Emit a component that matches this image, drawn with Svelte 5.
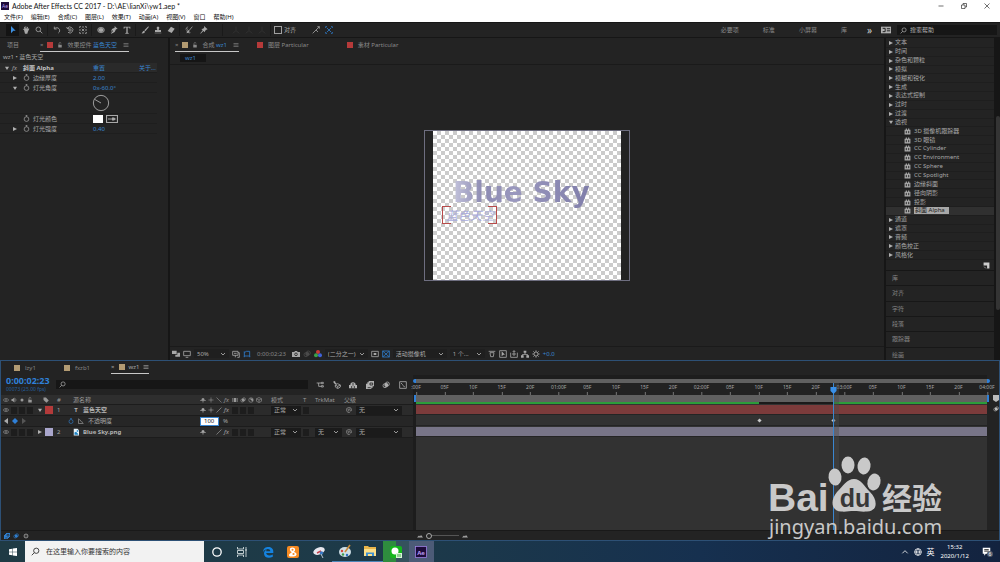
<script>
    const menus = ['文件(F)', '编辑(E)', '合成(C)', '图层(L)', '效果(T)', '动画(A)', '视图(V)', '窗口', '帮助(H)'];

    const tool_groups = [
        ['select', 'hand', 'zoom'],
        ['rotate', 'orbit', 'pan'],
        ['ellipse', 'pen', 'type'],
        ['brush', 'stamp', 'eraser'],
        ['roto', 'pin']
    ];

    const workspaces = ['必要项', '标准', '小屏幕', '库'];

    const categories_top = ['文本', '时间', '杂色和颗粒', '模拟', '模糊和锐化', '生成', '表达式控制', '过时', '过渡'];
    const perspective = ['3D 摄像机跟踪器', '3D 眼镜', 'CC Cylinder', 'CC Environment', 'CC Sphere', 'CC Spotlight', '边缘斜面', '径向阴影', '投影', '斜面 Alpha'];
    const categories_bottom = ['通道', '遮罩', '音频', '颜色校正', '风格化'];
    const collapsed = ['库', '对齐', '字符', '段落', '跟踪器', '绘画'];

    // one label every five frames
    const frames = ['05F', '10F', '15F', '20F'];
    const ticks = [':00F'];
    for (let s = 1; s <= 4; s++) ticks.push(...frames, `0${s}:00F`);

    const keyframes = [60, 73];
    const playhead = 73;

    const apps = ['cortana', 'taskview', 'edge', 'uc', 'snip', 'paint', 'folder', 'wechat', 'ae'];

    let snapping = $state(false);
    let opacity = $state('100');
    let search_help = $state('');
    let search_layers = $state('');
    let search_task = $state('');

    // s = stroked path, f = filled path, k = dark detail, on a 12x12 grid
    const icons = {
        select: { f: 'M3 0L10 7L6.500 7.200L3 11Z' },
        hand: { f: 'M3 6L1 4.500L2 4L3.500 5L3 1.500L4 1.300L5 4.500L5.300 .5H6.300L6.700 4.500L8 1L9 1.500L8.500 5L10 3.500L11 4L8.700 9L8 11.500H4.500Z' },
        zoom: { s: 'M5 1.500A3.500 3.500 0 1 0 5 8.500A3.500 3.500 0 1 0 5 1.500M7.500 7.500L11 11' },
        rotate: { s: 'M2.500 4A4.300 4.300 0 1 1 8 10.500M2 1V4.500H5.500' },
        orbit: { s: 'M2 3.500A4.500 4.500 0 1 1 3 9.500M1 1.500L2 4L4.500 3.500M6 4.200A1.800 1.800 0 1 0 6 7.800A1.800 1.800 0 1 0 6 4.200' },
        pan: { s: 'M1 3V1H3M9 1H11V3M11 9V11H9M3 11H1V9M6 0V3M6 9V12M0 6H3M9 6H12M4 4L8 8M8 4L4 8' },
        ellipse: { s: 'M6 2A5 4 0 1 0 6 10A5 4 0 1 0 6 2', f: 'M6 3A4 3 0 1 0 6 9A4 3 0 1 0 6 3' },
        pen: { f: 'M7 0L11.500 4.500L9 5L7 9L2 11.500L1.500 11L4.500 7.500L3.500 6.500L1 10L3 4.500L7 2.500Z' },
        type: { f: 'M1 1H11V4H10L9.500 2.300H7V10L8.500 10.500V11.500H3.500V10.500L5 10V2.300H2.500L2 4H1Z' },
        brush: { f: 'M11 .5L11.800 1.500L6.500 8L5 6.500ZM4.500 7L6 8.700C5.500 11 3 11.500 .5 11C2.500 10 2 8 4.500 7Z' },
        stamp: { f: 'M4.500 1H7.500L8 3L7 6H10.500V9H1.500V6H5L4 3ZM1 10H11V11H1Z' },
        eraser: { f: 'M6 1L11.500 4L7 10.500L1 7.500ZM1 8.500L6 11.300' },
        roto: { s: 'M1 5L4 1M11 1L6 7M4 4C1 8 5 11 8 10', f: 'M5 6L7 7.500L5 10L2 11Z' },
        pin: { f: 'M6 0L11.500 5L9.500 5.500L7.500 7.500L7.500 9.500L5 7.500L1 11.500L.5 11L4 6.500L2 4.500L4.500 4.300L6.200 2.500Z' },
        axes: { s: 'M6 1V7L1 11M6 7L11 11' },
        magnet: { s: 'M1 11L6 6L9 9M8 1L11 1V4M6 6L11 1' },
        cross: { s: 'M1 3V1H3M9 1H11V3M11 9V11H9M3 11H1V9M3 3L9 9M9 3L3 9' },
        menu: { s: 'M1 3H11M1 6H11M1 9H11' },
        lock: { s: 'M4 6V3A2 2 0 0 1 8 3', f: 'M2.500 5.500H9.500V11H2.500Z' },
        watch: { s: 'M6 3A4 4 0 1 0 6 11A4 4 0 1 0 6 3M4.500 1H7.500M6 1V3' },
        preset: { f: 'M1 3H3V1H5V3H7V1H9V3H11V11H1Z', k: 'M4 5V9M8 5V9M3 7H5M7 7H9' },
        tag: { f: 'M1 1H6L11.500 7L7 11.500L1 6Z' },
        eye: { s: 'M.5 6C3 2 9 2 11.500 6C9 10 3 10 .5 6Z', f: 'M6 4.500A1.500 1.500 0 1 0 6 7.500A1.500 1.500 0 1 0 6 4.500' },
        speaker: { f: 'M1 4H3L7 1V11L3 8H1Z', s: 'M9 3Q11 6 9 9' },
        solo: { f: 'M6 3A3 3 0 1 0 6 9A3 3 0 1 0 6 3' },
        shy: { f: 'M3 5A3 3 0 0 1 9 5V6H11.500V7.500H6.800V11H5.200V7.500H.5V6H3Z' },
        sun: { s: 'M6 1V3M6 9V11M1 6H3M9 6H11M6 4A2 2 0 1 0 6 8A2 2 0 1 0 6 4' },
        quality: { s: 'M1 1L11 11' },
        slash: { s: 'M1 11L11 1' },
        frame: { f: 'M1 2H11V10H1Z', k: 'M3 2V10M9 2V10' },
        blur: { s: 'M4.500 4A3 3 0 1 0 4.500 10A3 3 0 1 0 4.500 4M8 1.500A3 3 0 1 1 8 7.500A3 3 0 1 1 8 1.500', f: 'M6.500 3A3 3 0 1 0 6.500 9A3 3 0 1 0 6.500 3' },
        half: { s: 'M6 1.500A4.500 4.500 0 1 0 6 10.500A4.500 4.500 0 1 0 6 1.500', f: 'M3 3L9 9A4.300 4.300 0 0 0 9 3Z' },
        cube: { s: 'M6 1L11 3.500V8.500L6 11L1 8.500V3.500ZM1 3.500L6 6L11 3.500M6 6V11' },
        swirl: { s: 'M8 10.500A5 5 0 1 1 11 6C11 9 8 8.500 8 6.500A2 2 0 1 0 6 8' },
        graph: { s: 'M1 1V11H11M2 3C6 3 5 9 10 9' },
        graphbox: { s: 'M1 1H11V11H1ZM3 3L5 5C6 8 8 8 9 9' },
        flow: { s: 'M1 3H8M4 3V8H8M8 2H11V4H8ZM8 7H11V9H8Z' },
        draft: { s: 'M7 4L11 6V9L7 11.500L3.500 9V6ZM3.500 6L7 8L11 6M7 8V11', f: 'M0 1L3 0L4 3L6 4L3 5Z' },
        hide: { f: 'M2 6A4 4 0 0 1 10 6H12V11H0V6Z', k: 'M4 7.500V11M8 7.500V11M6 3V7' },
        frames: { f: 'M4 0H12V8H10V10H8V12H0V4H2V2H4Z', k: 'M6 3H10V6H6ZM2.500 10H7' },
        stack: { f: 'M0 1H7V6H0ZM5 7H8V4H12V10H5Z' },
        monitor: { s: 'M1 2H11V8.500H1ZM4 11H8' },
        res: { s: 'M1 2H9V8H1ZM9 4H11V11H8M5 8V11M3 5H7' },
        mask: { s: 'M2 9V4L5 2H10V9ZM1 10H3M9 10H11M1 3H3' },
        camera: { f: 'M0 3H3.500L4.500 1.500H7.500L8.500 3H12V10.500H0Z', k: 'M6 4.500A2 2 0 1 0 6 8.500A2 2 0 1 0 6 4.500' },
        roi: { s: 'M1 2H11V10H1Z', f: 'M4 4.500H8V7.500H4Z' },
        grid: { s: 'M1 1.500H11V10.500H1ZM1 1.500L11 10.500M11 1.500L1 10.500' },
        pixel: { s: 'M1 2H11M3 4H9L8 10H4Z' },
        fast: { s: 'M1 1H11V11H1Z', f: 'M4 2L9 7H6.500L4 9.500Z' },
        share: { s: 'M1 4V11H11V4M6 9V1M4 3L6 1L8 3M3 6H9' },
        tree: { f: 'M4 1H8V4H6.700V6H10V8H12V11.500H8V8H9V7H3V8H4V11.500H0V8H2V6H5.300V4H4Z' },
        gear: { s: 'M6 3A3 3 0 1 0 6 9A3 3 0 1 0 6 3M6 .5V3M6 9V11.500M.5 6H3M9 6H11.500M2 2L4 4M8 8L10 10M10 2L8 4M2 10L4 8' },
        note: { f: 'M1 1H11V11H7V6H1Z', s: 'M2 8L5 11' },
        chat: { f: 'M1 1H11V9H5L3 11.500V9H1Z', k: 'M3 3.500H9M3 5.500H9' },
        globe: { s: 'M6 1A5 5 0 1 0 6 11A5 5 0 1 0 6 1M6 1C3 4 3 8 6 11C9 8 9 4 6 1M1 6H11' },
        up: { s: 'M2 8L6 4L10 8' },
        hills: { f: 'M0 9L4 5L6 7L8 4L12 9Z' },
        panel: { f: 'M0 2H12V10H0Z', k: 'M2 4H5V8H2M7 4.500H11M7 7H11' },
        windows: { f: 'M0 1.700L5 1V5.600H0ZM5.700 .9L12 0V5.600H5.700ZM0 6.400H5V11L0 10.300ZM5.700 6.400H12V12L5.700 11.100Z' },
        minimize: { s: 'M1 6H11' },
        restore: { s: 'M1 4H8V11H1ZM4 4V1H11V8H8' },
        close: { s: 'M1 1L11 11M11 1L1 11' }
    };
</script>

{#snippet icon(name)}
    <svg class="icon" viewBox="0 0 12 12" aria-hidden="true">
        {#if icons[name].f}<path class="fill" d={icons[name].f} />{/if}
        {#if icons[name].s}<path class="stroke" d={icons[name].s} />{/if}
        {#if icons[name].k}<path class="cut" d={icons[name].k} />{/if}
    </svg>
{/snippet}

{#snippet dropdown(label, value)}
    <span class="dropdown">
        <select aria-label={label}><option>{value}</option></select>
        <svg viewBox="0 0 6 6" aria-hidden="true"><path d="M1 2L3 4L5 2" /></svg>
    </span>
{/snippet}

{#snippet twirl(open)}
    <svg class="twirl" viewBox="0 0 6 6" aria-hidden="true">
        <path d={open ? 'M0 1H6L3 6Z' : 'M0 0L6 3L0 6Z'} />
    </svg>
{/snippet}

<div class="desktop">
    <header>
        <div class="titlebar">
            <span class="ae-mark">Ae</span>
            <h1>Adobe After Effects CC 2017 - D:\AE\lianXi\yw1.aep *</h1>
            <div class="window-buttons">
                <button aria-label="最小化">{@render icon('minimize')}</button>
                <button aria-label="还原">{@render icon('restore')}</button>
                <button aria-label="关闭">{@render icon('close')}</button>
            </div>
        </div>
        <nav class="menubar">
            {#each menus as menu}<button>{menu}</button>{/each}
        </nav>
    </header>

    <div class="toolbar">
        {#each tool_groups as group}
            <div class="group">
                {#each group as tool}
                    <button class="tool" class:active={tool === 'select'} aria-label={tool}>{@render icon(tool)}</button>
                {/each}
            </div>
        {/each}
        <div class="group dim">
            {#each [1, 2, 3] as n}<button class="tool" aria-label="轴模式 {n}">{@render icon('axes')}</button>{/each}
        </div>
        <label class="snap"><input type="checkbox" bind:checked={snapping} />对齐</label>
        <button class="tool" aria-label="对齐边缘">{@render icon('magnet')}</button>
        <button class="tool blue" aria-label="对齐特征">{@render icon('cross')}</button>
        <div class="workspaces">
            {#each workspaces as workspace}<button>{workspace}</button>{/each}
            <button class="more">»</button>
            {@render icon('panel')}
            <label class="search">{@render icon('zoom')}<input aria-label="搜索帮助" placeholder="搜索帮助" bind:value={search_help} /></label>
        </div>
    </div>

    <main>
        <section class="panel controls">
            <div class="tabs">
                <button class="tab first">项目</button>
                <div class="tab current">
                    <span>×</span><i class="swatch red"></i>{@render icon('lock')}<span>效果控件 <a href="#layer">蓝色天空</a></span>{@render icon('menu')}
                </div>
            </div>
            <div class="path">wz1 • 蓝色天空</div>
            <div class="prop effect">{@render twirl(true)}<em>fx</em><b>斜面 Alpha</b><a href="#reset">重置</a><a class="about" href="#about">关于...</a></div>
            <div class="prop">{@render twirl(false)}{@render icon('watch')}<span>边缘厚度</span><a href="#edge">2.00</a></div>
            <div class="prop">{@render twirl(true)}{@render icon('watch')}<span>灯光角度</span><a href="#angle">0x-60.0°</a></div>
            <div class="prop dial">
                <svg viewBox="0 0 20 20" aria-hidden="true"><circle cx="10" cy="10" r="8.500" /><path d="M10 10L3 6" /></svg>
            </div>
            <div class="prop">
                <i></i>{@render icon('watch')}<span>灯光颜色</span>
                <div class="color">
                    <i></i>
                    <svg viewBox="0 0 12 8" aria-hidden="true"><path class="stroke" d="M.5 .5H11.500V7.500H.5Z" /><path class="fill" d="M2 3.500H6V2.500H8L10 4L8 5.500H6V4.500H2Z" /></svg>
                </div>
            </div>
            <div class="prop">{@render twirl(false)}{@render icon('watch')}<span>灯光强度</span><a href="#strength">0.40</a></div>
        </section>

        <section class="panel comp">
            <div class="tabs">
                <div class="tab current">
                    <span>×</span><i class="swatch tan"></i>{@render icon('lock')}<span>合成 <a href="#comp">wz1</a></span>{@render icon('menu')}
                </div>
                <button class="tab other"><i class="swatch red"></i>图层 Particular</button>
                <button class="tab other"><i class="swatch red"></i>素材 Particular</button>
            </div>
            <div class="crumbs"><button>wz1</button></div>
            <div class="viewer">
                <div class="frame">
                    <div class="canvas"></div>
                    <div class="title">Blue Sky</div>
                    <div class="subtitle">蓝色天空<i></i><i></i></div>
                </div>
            </div>
            <div class="viewbar">
                {@render icon('stack')}{@render icon('monitor')}
                <div class="w-zoom">{@render dropdown('放大率', '50%')}</div>
                {@render icon('res')}<span class="blue">{@render icon('mask')}</span>
                <span class="time">0:00:02:23</span>
                {@render icon('camera')}<span class="faint">{@render icon('blur')}</span>
                <svg class="rgb" viewBox="0 0 12 12" aria-hidden="true"><circle cx="6" cy="3" r="3" /><circle cx="3" cy="8" r="3" /><circle cx="9" cy="8" r="3" /></svg>
                <div class="w-res">{@render dropdown('分辨率', '(二分之一)')}</div>
                {@render icon('roi')}<span class="blue">{@render icon('grid')}</span>
                <div class="w-cam">{@render dropdown('3D 视图', '活动摄像机')}</div>
                <div class="w-view">{@render dropdown('视图布局', '1 个...')}</div>
                {@render icon('pixel')}{@render icon('fast')}{@render icon('share')}{@render icon('tree')}
                <span class="exposure">{@render icon('gear')}</span><a href="#exposure">+0.0</a>
            </div>
        </section>

        <section class="panel presets">
            <ul class="effects">
                {#each categories_top as name}<li>{@render twirl(false)}{name}</li>{/each}
                <li>{@render twirl(true)}透视</li>
                {#each perspective as name}
                    <li class="child" class:selected={name === '斜面 Alpha'}>{@render icon('preset')}<span>{name}</span></li>
                {/each}
                {#each categories_bottom as name}<li>{@render twirl(false)}{name}</li>{/each}
            </ul>
            <div class="presets-foot">{@render icon('note')}</div>
            <div class="collapsed">
                {#each collapsed as name}<button>{name}</button>{/each}
            </div>
        </section>
        <div class="scroll"><i></i></div>
    </main>

    <section class="timeline">
        <div class="comp-tabs">
            <button><i class="swatch tan"></i>lzy1</button>
            <button><i class="swatch tan"></i>fxzb1</button>
            <button class="current"><span>×</span><i class="swatch tan"></i>wz1{@render icon('menu')}</button>
        </div>
        <div class="split">
            <div class="layers">
                <div class="layer-head">
                    <div class="clock"><strong>0:00:02:23</strong><small>00073 (25.00 fps)</small></div>
                    <label class="search">{@render icon('zoom')}<input aria-label="搜索图层" bind:value={search_layers} /></label>
                    <div class="head-icons">
                        {#each ['flow', 'draft', 'hide', 'frames', 'blur', 'graphbox'] as name}<button aria-label={name}>{@render icon(name)}</button>{/each}
                    </div>
                </div>
                <div class="row columns">
                    <div class="av">{@render icon('eye')}{@render icon('speaker')}{@render icon('solo')}{@render icon('lock')}</div>
                    <div class="label">{@render icon('tag')}</div>
                    <div class="number">#</div>
                    <div class="source">源名称</div>
                    <div class="switches">{@render icon('shy')}{@render icon('sun')}{@render icon('quality')}<em>fx</em>{@render icon('frame')}{@render icon('blur')}{@render icon('half')}{@render icon('cube')}</div>
                    <div>模式</div>
                    <div>T</div>
                    <div>TrkMat</div>
                    <div>父级</div>
                </div>
                <div class="row">
                    <div class="av">{@render icon('eye')}<i></i><i></i><i></i></div>
                    <div class="label">{@render twirl(true)}<i class="chip red"></i></div>
                    <div class="number">1</div>
                    <div class="name"><span class="glyph">T</span><b>蓝色天空</b></div>
                    <div class="switches">{@render icon('shy')}{@render icon('sun')}{@render icon('slash')}<em>fx</em><i></i><i></i><i></i></div>
                    <div>{@render dropdown('模式', '正常')}</div>
                    <div><i class="box"></i></div>
                    <div></div>
                    <div class="parent">{@render icon('swirl')}{@render dropdown('父级', '无')}</div>
                </div>
                <div class="row prop-row">
                    <div class="keys"><svg viewBox="0 0 24 6" aria-hidden="true"><path d="M4 0V6L0 3Z" /><path class="on" d="M11 0L14 3L11 6L8 3Z" /><path class="off" d="M18 0L22 3L18 6Z" /></svg></div>
                    <div></div><div></div>
                    <label for="opacity"><span class="blue">{@render icon('watch')}</span>{@render icon('graph')}<span>不透明度</span></label>
                    <div class="value"><input id="opacity" bind:value={opacity} /><span>%</span></div>
                </div>
                <div class="row">
                    <div class="av">{@render icon('eye')}<i></i><i></i><i></i></div>
                    <div class="label">{@render twirl(false)}<i class="chip lavender"></i></div>
                    <div class="number">2</div>
                    <div class="name"><svg class="glyph" viewBox="0 0 8 9" aria-hidden="true"><path fill="#e8f3fa" d="M1 0H6L8 2V9H1Z" /><path fill="#1c83c4" d="M2 8V5L4 4L7 7V8ZM5 2H7V4H5Z" /></svg><b>Blue Sky.png</b></div>
                    <div class="switches">{@render icon('shy')}<span></span>{@render icon('slash')}<em>fx</em><i></i><i></i><i></i></div>
                    <div>{@render dropdown('模式', '正常')}</div>
                    <div><i class="box"></i></div>
                    <div>{@render dropdown('TrkMat', '无')}</div>
                    <div class="parent">{@render icon('swirl')}{@render dropdown('父级', '无')}</div>
                </div>
            </div>
            <div class="tracks">
                <div class="navigator"></div>
                <div class="area">
                    <div class="ruler">
                        {#each ticks as tick, i}<span style="left: {i * 5}%">{tick}</span>{/each}
                    </div>
                    <div class="work"></div>
                    <div class="cache"></div>
                    <div class="track"><div class="bar red"></div></div>
                    <div class="track">
                        {#each keyframes as at}<i class="key" style="left: {at}%"></i>{/each}
                    </div>
                    <div class="track"><div class="bar lavender"></div></div>
                    <div class="playhead" style="left: {playhead}%">
                        <svg viewBox="0 0 6 7" aria-hidden="true"><path d="M0 0H6V4L3 7L0 4Z" /></svg>
                    </div>
                </div>
            </div>
            <div class="gutter">
                <svg viewBox="0 0 6 7" aria-hidden="true"><path d="M0 0H6V5L3 7L0 5Z" /></svg>
                {@render icon('blur')}
            </div>
        </div>
        <div class="status">
            <span class="blue">{@render icon('frames')}{@render icon('blur')}</span>{@render icon('gear')}
            <div class="zoomer">{@render icon('hills')}<input type="range" aria-label="缩放" min="0" max="100" value="0" />{@render icon('hills')}</div>
        </div>
    </section>

    <footer>
        <button class="start" aria-label="开始">{@render icon('windows')}</button>
        <label class="task-search">{@render icon('zoom')}<input aria-label="搜索" placeholder="在这里输入你要搜索的内容" bind:value={search_task} /></label>
        <div class="apps">
            {#each apps as app}
                <button class={app} aria-label={app}>
                    <svg viewBox="0 0 14 14" aria-hidden="true">
                        {#if app === 'cortana'}
                            <circle cx="7" cy="7" r="4.200" fill="none" stroke="#fff" stroke-width="1.300" />
                        {:else if app === 'taskview'}
                            <path d="M2.500 2V4H8.500V2M2.500 12V10H8.500V12M2.500 5.500H8.500V8.500H2.500ZM11 2V12M10 5H12" fill="none" stroke="#e4ecee" stroke-width=".8" />
                        {:else if app === 'edge'}
                            <path d="M2 7C2.500 3 4.500 2 7.500 2C11 2 12.700 4.500 12.300 8H5.200C5.200 10.500 9 11.200 11.800 9.500V11.800C7.500 14 3 12.500 3 8.500C3 6.500 4.500 5 6 4.500C5.200 5.300 5.200 5.700 5.200 6.200H9.300C9.300 3.300 4.500 3.300 2 7Z" fill="#1583e0" />
                        {:else if app === 'uc'}
                            <rect x="1" y="1" width="12" height="12" rx="2" fill="#f58a22" />
                            <path d="M4 3.500C6 1.500 10 3 9 5.500L8 7C12 8 11 11.500 7.500 11.500H4.500C3 11.500 2.500 10 3.500 9L6 7C4.500 7 3.500 5 4 3.500Z" fill="#fff" /><circle cx="6.500" cy="4.800" r="1" fill="#f58a22" /><circle cx="7.500" cy="9" r="1.100" fill="#f58a22" />
                        {:else if app === 'snip'}
                            <ellipse cx="7" cy="6" rx="6" ry="3.500" fill="#e7e7ee" transform="rotate(-20 7 6)" />
                            <path d="M5 8L9 6" stroke="#c33f48" stroke-width="1.500" /><circle cx="9.500" cy="8" r="1.800" fill="#3a79c4" /><path d="M9 9L11 13" stroke="#b9c6d4" />
                        {:else if app === 'paint'}
                            <ellipse cx="7" cy="8" rx="6" ry="5" fill="#cfdfe7" />
                            <circle cx="4" cy="7" r="1.200" fill="#d8473c" /><circle cx="5" cy="10.500" r="1.200" fill="#3d9b4a" /><circle cx="9" cy="11" r="1.200" fill="#2c6fc0" />
                            <path d="M7 8L12 1" stroke="#c98a3a" stroke-width="1.600" />
                        {:else if app === 'folder'}
                            <path d="M1 2H5L6 3H13V12H1Z" fill="#e9b64b" /><path d="M1 5H13V12H1Z" fill="#fbe08a" /><path d="M3 12V8.500H11V12H9V10H5V12Z" fill="#3f92d2" />
                        {:else if app === 'wechat'}
                            <rect x="1" y="1" width="12" height="12" rx="2" fill="#14b61c" />
                            <circle cx="6" cy="6" r="3.500" fill="#fff" /><rect x="7" y="8" width="6" height="5" fill="#d9f5d7" /><path d="M9 9V12M11 9V12" stroke="#3fae46" />
                        {:else}
                            <rect x="1.500" y="1.500" width="11" height="11" fill="#1d0a3a" stroke="#9b7fe0" stroke-width=".8" />
                            <text x="7" y="9.500" text-anchor="middle">Ae</text>
                        {/if}
                    </svg>
                </button>
            {/each}
        </div>
        <div class="tray">
            {@render icon('up')}{@render icon('globe')}<span class="ime">英</span>
            <div class="datetime"><span>15:32</span><span>2020/1/12</span></div>
            <div class="notice">{@render icon('chat')}<span>6</span></div>
        </div>
    </footer>

    <svg class="watermark" viewBox="0 0 184 86" aria-label="Baidu 经验">
        <text class="bai" x="1" y="57">Bai</text>
        <g>
            <ellipse cx="68" cy="23" rx="6.500" ry="8.500" transform="rotate(-6 68 23)" />
            <ellipse cx="81" cy="11" rx="6.500" ry="8.500" />
            <ellipse cx="97" cy="12" rx="6.500" ry="8.500" transform="rotate(8 97 12)" />
            <ellipse cx="107" cy="28" rx="6.500" ry="8.500" transform="rotate(14 107 28)" />
            <path d="M87 25C94 25 97 32 103 38C111 46 111 57 100 57.500C94 58 92 57 87 57C82 57 79 58 74 57.500C64 57 63 46 70 38C76 32 80 25 87 25Z" />
        </g>
        <text class="du" x="88" y="53" text-anchor="middle">du</text>
        <text class="jy" x="115" y="55">经验</text>
        <text class="url" x="2" y="80">jingyan.baidu.com</text>
    </svg>
</div>

<style>
    :global(body) {
        background: #161616;
        overflow: hidden;
    }

    .desktop {
        display: flex;
        flex-direction: column;
        height: 100vh;
        position: relative;
        background: #161616;
        color: #a8a8a8;
        font: 6px/8px "Noto Sans", "Noto Sans CJK SC", sans-serif;
        white-space: nowrap;
    }

    button, input, select {
        all: unset;
        box-sizing: border-box;
        font: inherit;
        color: inherit;
    }

    button { cursor: pointer; }
    a { color: #3a86d0; text-decoration: none; }
    i { display: block; }
    h1, ul { margin: 0; padding: 0; list-style: none; }

    .icon {
        display: block;
        width: 8px;
        height: 8px;
        flex: none;
    }

    .fill { fill: currentColor; }
    .stroke { fill: none; stroke: currentColor; stroke-width: 1.2; }
    .cut { fill: none; stroke: #222; stroke-width: 1.2; }
    .blue { color: #2f7fd0; display: flex; }
    .faint { color: #4a4a4a; }

    .twirl { width: 4px; height: 4px; fill: #b0b0b0; flex: none; }

    .swatch { width: 6px; height: 6px; flex: none; }
    .swatch.red { background: #b53a3a; }
    .swatch.tan { background: #b39b72; }

    .dropdown {
        display: flex;
        align-items: center;
        justify-content: space-between;
        flex: 1;
        height: 9px;
        padding: 0 3px;
        background: #1b1b1b;
    }

    .dropdown select { flex: 1; min-width: 0; overflow: hidden; }
    .dropdown svg { width: 6px; height: 6px; fill: none; stroke: #999; stroke-width: 1; }

    /* title and menus */
    header {
        background: #fff;
        color: #111;
        flex: none;
    }

    .titlebar { display: flex; align-items: center; height: 12px; }
    h1 { font: 400 7px/12px Lato, sans-serif; margin-left: 3px; }

    .ae-mark {
        width: 8px;
        margin-left: 1px;
        background: #1f0b3b;
        color: #b79cf0;
        font-size: 5px;
        text-align: center;
    }

    .window-buttons { display: flex; gap: 17px; margin: 0 10px 0 auto; }
    .window-buttons .icon { width: 6px; height: 6px; }
    .menubar { display: flex; gap: 8px; padding-left: 4px; height: 10px; line-height: 10px; }

    /* tools */
    .toolbar {
        display: flex;
        align-items: center;
        height: 14px;
        margin-top: 1px;
        padding-left: 4px;
        background: #232323;
        flex: none;
    }

    .group {
        display: flex;
        padding: 0 2px;
        border-right: 1px solid #1a1a1a;
        box-sizing: border-box;
    }

    .group:nth-child(5) { padding-right: 12px; gap: 2px; }
    .group.dim { color: #343434; padding-left: 6px; }

    .tool {
        display: flex;
        justify-content: center;
        align-items: center;
        width: 13px;
        height: 12px;
    }

    .tool.active { background: #141414; color: #3d8fe0; }
    .snap { display: flex; align-items: center; gap: 2px; margin: 0 13px 0 3px; }
    .snap input { width: 8px; height: 8px; border: 1px solid #a0a0a0; }

    .workspaces {
        display: flex;
        align-items: center;
        gap: 24px;
        margin-left: auto;
        height: 14px;
        padding-right: 3px;
        color: #8a8a8a;
    }

    .workspaces .more { font-size: 10px; color: #ccc; margin: 0 -15px 0 -4px; }
    .workspaces > .icon { width: 10px; height: 10px; margin-right: -18px; color: #b0b0b0; }

    .search {
        display: flex;
        align-items: center;
        gap: 3px;
        height: 10px;
        padding-left: 3px;
        box-sizing: border-box;
        background: #161616;
        color: #b0b0b0;
    }

    .search .icon, .task-search .icon { transform: scaleX(-1); width: 7px; height: 7px; }
    .workspaces .search { width: 100px; }
    input::placeholder { color: inherit; opacity: 1; }

    /* panels */
    main {
        display: grid;
        grid-template-columns: 168px 1fr 108px 4px;
        gap: 2px;
        flex: 1;
        min-height: 0;
        margin-top: 1px;
        overflow: hidden;
    }

    .panel { background: #232323; min-width: 0; min-height: 0; }
    .tabs { display: flex; height: 14px; color: #8a8a8a; }
    .tab { display: flex; align-items: center; gap: 4px; height: 13px; }
    .tab.first { padding-left: 7px; width: 40px; }
    .tab.current { border-bottom: 1px solid #c8c8c8; }
    .tab.current .icon { width: 6px; height: 6px; }
    .tab.current .icon:last-child { margin-left: 2px; }
    .path { height: 11px; line-height: 11px; padding-left: 3px; }

    .prop {
        display: grid;
        grid-template-columns: 10px 10px 60px 46px 1fr;
        align-items: center;
        height: 10px;
        padding-left: 13px;
        margin-right: 11px;
        border-bottom: 1px solid #1e1e1e;
        box-sizing: border-box;
    }

    .prop .icon { width: 7px; height: 7px; }
    .effect { grid-template-columns: 7px 11px 70px 46px 1fr; padding-left: 5px; background: #2a2a2a; }
    .effect b { color: #c4c4c4; }
    .dial { height: 21px; }
    .dial svg { grid-column: 4; width: 18px; height: 18px; margin-left: -1px; fill: none; stroke: #aaa; }
    .color { display: flex; gap: 3px; }
    .color i { width: 10px; height: 8px; background: #fff; }
    .color svg { width: 12px; height: 8px; }

    .comp { display: flex; flex-direction: column; }
    .comp .tabs { padding-left: 5px; }
    .other { margin-left: 18px; gap: 5px; }
    .other + .other { margin-left: 38px; }
    .crumbs { height: 12px; padding-left: 10px; border-bottom: 1px solid #1a1a1a; }
    .crumbs button { width: 26px; height: 8px; padding-left: 5px; background: #151515; color: #3a86d0; display: block; margin-top: 2px; }

    .viewer {
        flex: 1;
        display: flex;
        align-items: center;
        justify-content: center;
    }

    .frame {
        position: relative;
        width: 206px;
        height: 151px;
        box-sizing: border-box;
        border: 1px solid #6e6e80;
        padding: 0 8px;
    }

    .canvas {
        height: 100%;
        background: conic-gradient(#cbcbcb 25%, #fff 0 50%, #cbcbcb 0 75%, #fff 0) 0 0 / 8px 8px;
    }

    .title {
        position: absolute;
        left: 28px;
        top: 45px;
        font: bold 28px/34px "DejaVu Sans", sans-serif;
        color: transparent;
        background: linear-gradient(90deg, #c3c3dc, #8c8ab2 22%, #9a98be 45%, #807eaa);
        background-clip: text;
    }

    .subtitle {
        position: absolute;
        left: 17px;
        top: 75px;
        width: 55px;
        height: 18px;
        padding-left: 4px;
        box-sizing: border-box;
        color: #a9abdc;
        font: italic 12px/17px "Noto Sans CJK SC", sans-serif;
    }

    .subtitle i {
        position: absolute;
        inset: 0 auto 0 0;
        width: 9px;
        border: 1px solid #b84a4a;
        border-right: 0;
        box-sizing: border-box;
    }

    .subtitle i + i { inset: 0 0 0 auto; border: 1px solid #b84a4a; border-left: 0; }

    .viewbar {
        display: flex;
        align-items: center;
        gap: 3px;
        height: 13px;
        padding-left: 2px;
        border-top: 1px solid #1a1a1a;
    }

    .viewbar > div { display: flex; }
    .viewbar .dropdown { background: #1f1f1f; }
    .w-zoom { width: 35px; }
    .w-res { width: 43px; }
    .w-cam { width: 54px; }
    .w-view { width: 35px; }
    .time { color: #868686; padding: 0 3px; }
    .rgb { width: 8px; height: 8px; }
    .rgb circle { fill: #c93a36; }
    .rgb circle:nth-child(2) { fill: #3aa14a; }
    .rgb circle:nth-child(3) { fill: #3f62d8; }

    .presets { display: flex; flex-direction: column; }

    .effects {
        flex: 1;
        display: grid;
        grid-auto-rows: 1fr;
        min-height: 0;
        padding-top: 1px;
    }

    .effects li {
        display: flex;
        align-items: center;
        gap: 2px;
        padding-left: 3px;
        min-height: 0;
        line-height: 7px;
        border-bottom: 1px solid #1e1e1e;
        color: #a8a8a8;
    }

    .effects .child { padding-left: 18px; gap: 3px; }
    .child .icon { width: 7px; height: 7px; }
    .effects .selected { background: #303030; }
    .selected span { background: #a8a8a8; color: #222; padding: 0 4px 0 1px; }
    .presets-foot { height: 11px; border-bottom: 1px solid #161616; display: flex; justify-content: flex-end; padding-right: 4px; align-items: center; flex: none; box-sizing: border-box; }
    .presets-foot .icon { width: 7px; height: 7px; color: #ccc; }
    .collapsed { height: 92px; margin-bottom: -3px; display: grid; grid-auto-rows: 1fr; flex: none; }
    .collapsed button { display: flex; align-items: center; padding-left: 6px; border-bottom: 1px solid #171717; color: #858585; }
    .scroll i { height: 194px; margin-top: 78px; background: #343434; border-radius: 2px; }

    /* timeline */
    .timeline {
        display: flex;
        flex-direction: column;
        height: 181px;
        box-sizing: border-box;
        flex: none;
        background: #232323;
        border: 1px solid #2d5075;
    }

    .comp-tabs { display: flex; gap: 28px; height: 14px; padding-left: 13px; color: #858585; }
    .comp-tabs button { display: flex; align-items: center; gap: 5px; height: 13px; }
    .comp-tabs .current { border-bottom: 1px solid #c8c8c8; margin-left: -7px; gap: 4px; color: #aaa; }
    .comp-tabs .icon { width: 6px; height: 6px; }

    .split { flex: 1; display: flex; min-height: 0; }
    .layers { width: 412px; flex: none; }
    .layer-head { display: flex; align-items: center; height: 19px; padding-left: 5px; }
    .clock { width: 50px; color: #2f80d8; }
    .clock strong { display: block; font-size: 9px; line-height: 10px; }
    .clock small { display: block; font-size: 5px; line-height: 7px; color: #265f9c; }
    .layer-head .search { width: 252px; height: 9px; padding-left: 3px; }
    .head-icons { flex: 1; display: flex; justify-content: space-between; padding: 0 6px 0 8px; color: #b0b0b0; }

    .row {
        display: grid;
        grid-template-columns: 36px 18px 13px 132px 71px 32px 12px 29px 1fr;
        align-items: center;
        height: 10px;
        background: #2b2b2b;
        border-bottom: 1px solid #1c1c1c;
    }

    .row.columns { background: #2e2e2e; height: 9px; margin-top: 1px; color: #989898; }
    .row > div { display: flex; align-items: center; min-width: 0; }
    .row .icon { width: 6px; height: 6px; }
    .row .av { gap: 2px; padding-left: 2px; }
    .av i, .switches i, .box { width: 6px; height: 7px; background: #1d1d1d; }
    .row .label { gap: 3px; padding-left: 1px; }
    .row .number { padding-left: 2px; }
    .row .source { padding-left: 5px; }
    .columns .label { padding-left: 6px; }
    .chip { width: 8px; height: 8px; }
    .chip.red { background: #b33a3a; }
    .chip.lavender { background: #a9a6cc; }
    .name { color: #b4b4b4; gap: 4px; padding-left: 5px; }
    .glyph { width: 6px; height: 8px; font-weight: 700; text-align: center; }
    .switches { gap: 2px; }
    .switches em, .switches span { width: 6px; }
    .parent { gap: 4px; padding: 0 9px 0 2px; }
    .row .dropdown { margin-right: 2px; }
    .prop-row { background: #262626; }
    .keys svg { width: 24px; height: 6px; margin-left: 3px; fill: #aaa; }
    .keys .on { fill: #2f80d8; }
    .keys .off { fill: #555; }
    .prop-row label { display: flex; gap: 4px; align-items: center; }
    .value { gap: 4px; }
    .value input { width: 19px; height: 9px; padding-left: 3px; background: #fff; color: #222; border: 1px solid #3a86d0; line-height: 7px; }

    .tracks { flex: 1; padding-left: 3px; background: #1d1d1d; display: flex; flex-direction: column; }
    .navigator {
        height: 4px;
        margin: 4px -3px 0;
        background: #606060;
        border: solid #2f80d8;
        border-width: 0 3px;
        border-radius: 2px;
        position: relative;
    }

    .area { flex: 1; position: relative; background: #323232; display: flex; flex-direction: column; }
    .ruler { position: relative; height: 12px; background: #222; color: #a8a8a8; font-size: 5px; }
    .ruler span { position: absolute; transform: translateX(-50%); line-height: 7px; top: 1px; }
    .ruler span::after { content: ""; position: absolute; left: 50%; top: 8px; height: 3px; border-left: 1px solid #777; }
    .work { height: 7px; margin: 0 -2px; background: #606060; border: solid #2f80d8; border-width: 0 2px; }
    .cache { height: 2px; flex: none; background: linear-gradient(90deg, #2c9c3a 60%, #1a1a1a 0 73%, #2c9c3a 0); }
    .track { position: relative; height: 10px; border-bottom: 1px solid #242424; }
    .bar { height: 9px; margin-top: 1px; }
    .bar.red { background: #7c3b3b; }
    .bar.lavender { background: #787588; }
    .key { position: absolute; top: 4px; width: 3px; height: 3px; margin-left: -1px; background: #c8c8c8; transform: rotate(45deg); }

    .playhead { position: absolute; top: 0; bottom: 0; width: 5px; background: #4a4a4a66; border-left: 1px solid #3a86d0; }
    .playhead svg { position: absolute; left: -4px; top: 4px; width: 7px; height: 7px; fill: #3a90e8; }

    .gutter {
        width: 12px;
        display: flex;
        flex-direction: column;
        align-items: flex-end;
        gap: 4px;
        padding-top: 20px;
        background: #232323;
        color: #bbb;
    }

    .gutter svg:first-child { width: 6px; height: 7px; fill: #bbb; }
    .gutter .icon { width: 6px; height: 6px; }

    .status { display: flex; align-items: center; gap: 4px; height: 9px; padding-left: 3px; border-top: 1px solid #191919; }
    .status .blue { gap: 3px; }
    .status .icon { width: 6px; height: 6px; }
    .zoomer { display: flex; align-items: center; gap: 3px; margin-left: 384px; }
    .zoomer input { width: 33px; height: 1px; background: #555; }
    .zoomer input::-webkit-slider-thumb { appearance: none; width: 6px; height: 6px; box-sizing: border-box; border: 1px solid #aaa; border-radius: 50%; background: #232323; }

    /* taskbar */
    footer {
        display: flex;
        height: 21px;
        flex: none;
        color: #fff;
        background: linear-gradient(90deg, #1f3a44, #1d3a49 40%, #16304f 70%, #13233f);
    }

    .start { width: 25px; display: flex; align-items: center; justify-content: center; }
    .task-search { width: 179px; display: flex; align-items: center; gap: 6px; padding-left: 6px; box-sizing: border-box; background: #f2f2f2; color: #333; font-size: 7px; }
    .task-search .icon { width: 9px; height: 9px; }
    .task-search input { flex: 1; }
    .apps { display: flex; flex: 0 0 230px; }
    .apps button { flex: 1; display: flex; align-items: center; justify-content: center; }
    .apps svg { width: 14px; height: 14px; }
    .apps text { fill: #b79cf0; font-size: 6px; font-weight: 700; }
    .apps .paint, .apps .folder { border-bottom: 1px solid #4d86b8; }
    .apps .wechat { background: linear-gradient(90deg, #2e8c3e 50%, #35525d 0); }
    .apps .ae { background: #4c5b77; }
    .tray { display: flex; align-items: center; margin-left: auto; gap: 5px; padding-right: 9px; }
    .ime { font-size: 8px; }
    .datetime { display: flex; flex-direction: column; align-items: center; margin: 0 8px 0 1px; line-height: 9px; font-size: 6px; }
    .notice { position: relative; }
    .notice .icon { width: 9px; height: 9px; }
    .notice span { position: absolute; left: 5px; top: 4px; width: 6px; height: 6px; border-radius: 50%; background: #555d6c; font-size: 5px; line-height: 6px; text-align: center; }

    .watermark {
        position: absolute;
        right: 49px;
        bottom: 22px;
        width: 184px;
        height: 86px;
        fill: #c9c9c9;
        pointer-events: none;
    }

    .bai { font: bold 39px "Liberation Sans", sans-serif; }
    .du { font: bold 25px "Liberation Sans", sans-serif; fill: #383838; }
    .jy { font: bold 30px "Noto Sans CJK SC", sans-serif; }
    .url { font: 20px "Noto Sans", sans-serif; }
</style>
